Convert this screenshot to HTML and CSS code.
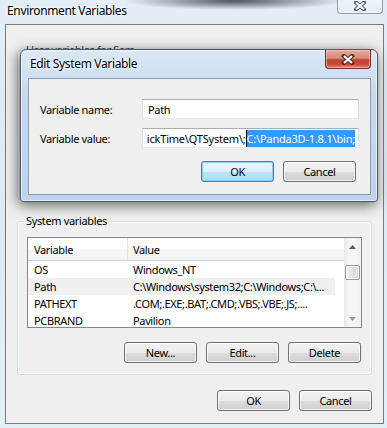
FILE: index.html
```html
<!DOCTYPE html>
<html lang="en">
<head>
  <meta charset="UTF-8" />
  <title>Environment Variables</title>
  <link rel="stylesheet" href="styles.css">
</head>
<body>
  <div class="window">
    <div class="titlebar">
      <span class="title">Environment Variables</span>
      <div class="close-btn inactive">
        <svg width="12" height="10" viewBox="0 0 12 10"><path d="M2 1.5 L10 8.5 M10 1.5 L2 8.5" stroke="#55606a" stroke-width="4" stroke-linecap="square"/><path d="M2 1.5 L10 8.5 M10 1.5 L2 8.5" stroke="#fff" stroke-width="2"/></svg>
      </div>
    </div>

    <div class="client">
      <div class="group user-group">
        <span class="group-label">User variables for Sam</span>
      </div>

      <div class="group sys-group">
        <span class="group-label">System variables</span>
        <div class="listview">
          <div class="lv-main">
            <div class="lv-header">
              <div class="col1">Variable</div>
              <div class="col2">Value</div>
            </div>
            <div class="lv-row"><div class="col1">OS</div><div class="col2">Windows_NT</div></div>
            <div class="lv-row selected"><div class="col1">Path</div><div class="col2">C:\Windows\system32;C:\Windows;C:\...</div></div>
            <div class="lv-row"><div class="col1">PATHEXT</div><div class="col2">.COM;.EXE;.BAT;.CMD;.VBS;.VBE;.JS;....</div></div>
            <div class="lv-row"><div class="col1">PCBRAND</div><div class="col2">Pavilion</div></div>
          </div>
          <div class="scrollbar">
            <div class="sb-arrow"><svg width="7" height="4" viewBox="0 0 7 4"><path d="M0 4 L3.5 0 L7 4 Z" fill="#5b5b5b"/></svg></div>
            <div class="sb-track"><div class="sb-thumb"></div></div>
            <div class="sb-arrow"><svg width="7" height="4" viewBox="0 0 7 4"><path d="M0 0 L7 0 L3.5 4 Z" fill="#9a9a9a"/></svg></div>
          </div>
        </div>
        <div class="btn-row">
          <button class="btn">New...</button>
          <button class="btn">Edit...</button>
          <button class="btn">Delete</button>
        </div>
      </div>

      <div class="btn-row footer">
        <button class="btn">OK</button>
        <button class="btn">Cancel</button>
      </div>
    </div>
  </div>

  <!-- modal: Edit System Variable -->
  <div class="dialog">
    <div class="dlg-titlebar">
      <span class="title">Edit System Variable</span>
      <div class="close-btn red">
        <svg width="14" height="11" viewBox="0 0 14 11"><path d="M3 2 L11 9 M11 2 L3 9" stroke="#5a2a22" stroke-width="4.2" stroke-linecap="square"/><path d="M3 2 L11 9 M11 2 L3 9" stroke="#fff" stroke-width="2.2"/></svg>
      </div>
    </div>
    <div class="dlg-client">
      <div class="form">
        <label>Variable name:</label>
        <div class="field"><span>Path</span></div>
        <label>Variable value:</label>
        <div class="field value"><span>ickTime\QTSystem\;</span><span class="sel">C:\Panda3D-1.8.1\bin;</span></div>
      </div>
      <div class="btn-row dlg-buttons">
        <button class="btn default">OK</button>
        <button class="btn">Cancel</button>
      </div>
    </div>
  </div>
</body>
</html>
```

FILE: styles.css
```css
body {
  margin: 0;
  width: 387px;
  height: 428px;
  overflow: hidden;
  position: relative;
  font-family: 'Noto Sans', sans-serif;
  font-size: 11px;
  letter-spacing: -0.35px;
  color: #000;
  background:
    radial-gradient(ellipse 110px 9px at 235px 1px, rgba(55, 60, 66, 0.85), rgba(55, 60, 66, 0)),
    linear-gradient(180deg, #e4eef6 0%, #dcebf4 40%, #e2f1f5 100%);
}

.window {
  padding: 0 3px 0 5px;
}

.titlebar {
  height: 24px;
  display: flex;
  align-items: flex-start;
  justify-content: space-between;
}

.title {
  padding: 2px 0 0 2px;
  font-size: 12px;
  text-shadow: 0 0 6px #fff, 0 0 3px #fff;
}

.close-btn {
  display: flex;
  align-items: center;
  justify-content: center;
  box-sizing: border-box;
}

.close-btn.inactive {
  width: 46px;
  height: 15px;
  margin-top: -1px;
  margin-right: 1px;
  border: 1px solid #8d99a4;
  border-top: none;
  border-radius: 0 0 4px 4px;
  background: linear-gradient(180deg, rgba(255, 255, 255, 0.35), rgba(230, 240, 248, 0.7));
  box-shadow: inset 0 0 0 1px rgba(255, 255, 255, 0.6);
}

.client {
  box-sizing: border-box;
  width: 379px;
  height: 400px;
  border: 1px solid #7a7a7a;
  background: #f0f0f0;
  padding: 0 11px;
  display: flex;
  flex-direction: column;
}

.group {
  position: relative;
  box-sizing: border-box;
  border: 1px solid #d5dfe5;
  border-radius: 3px;
  box-shadow: inset 0 0 0 1px #fff;
}

.group-label {
  position: absolute;
  top: -8px;
  left: 6px;
  padding: 0 2px;
  background: #f0f0f0;
  line-height: 14px;
}

.user-group {
  margin-top: 25px;
  height: 150px;
}

.user-group .group-label {
  color: #444;
}

.sys-group {
  margin-top: 21px;
  height: 154px;
  padding: 15px 9px 0 9px;
}

.listview {
  box-sizing: border-box;
  height: 91px;
  border: 1px solid #828790;
  background: #fff;
  display: flex;
  overflow: hidden;
}

.lv-main {
  flex: 1;
  overflow: hidden;
}

.lv-header {
  display: flex;
  height: 22px;
  border-bottom: 1px solid #d5d5d5;
  background: linear-gradient(180deg, #ffffff 0%, #ffffff 50%, #f7f8fa 51%, #f3f4f6 100%);
}

.lv-header div {
  display: flex;
  align-items: center;
}

.lv-header .col1 {
  border-right: 1px solid #e3e5e8;
}

.col1 {
  box-sizing: border-box;
  width: 100px;
  padding-left: 6px;
  flex-shrink: 0;
}

.col2 {
  padding-left: 5px;
  white-space: nowrap;
  overflow: hidden;
}

.lv-row {
  display: flex;
  width: 307px;
  height: 17px;
  align-items: center;
}

.lv-row.selected {
  background: #f0f0f0;
}

.scrollbar {
  width: 17px;
  display: flex;
  flex-direction: column;
  background: linear-gradient(90deg, #e9e9e9, #f6f6f6 30%, #f6f6f6 70%, #ededed);
}

.sb-arrow {
  height: 17px;
  display: flex;
  align-items: center;
  justify-content: center;
}

.sb-track {
  flex: 1;
  padding: 10px 1px 0 1px;
}

.sb-thumb {
  box-sizing: border-box;
  height: 15px;
  border: 1px solid #9b9b9b;
  border-radius: 2px;
  background: linear-gradient(90deg, #f5f5f5, #e2e2e2 50%, #d8d8d8 51%, #e6e6e6);
  box-shadow: inset 0 0 0 1px rgba(255, 255, 255, 0.7);
}

.btn-row {
  display: flex;
  justify-content: flex-end;
  gap: 9px;
}

.sys-group .btn-row {
  margin-top: 14px;
  margin-right: 1px;
}

.footer {
  margin-top: 15px;
}

.btn {
  box-sizing: border-box;
  width: 73px;
  height: 21px;
  padding: 0;
  border: 1px solid #707070;
  border-radius: 3px;
  background: linear-gradient(180deg, #f2f2f2 0%, #ebebeb 50%, #dddddd 51%, #cfcfcf 100%);
  box-shadow: inset 0 0 0 1px rgba(255, 255, 255, 0.75);
  font: inherit;
  letter-spacing: inherit;
  color: #000;
}

.btn.default {
  border-color: #3c7fb1;
  background: linear-gradient(180deg, #eaf6fd 0%, #d9f0fc 50%, #bee6fd 51%, #a7d9f5 100%);
  box-shadow: inset 0 0 0 1px #8ed0f2;
}

/* modal dialog over the main window */
.dialog {
  position: absolute;
  left: 20px;
  top: 49px;
  box-sizing: border-box;
  width: 358px;
  height: 153px;
  padding: 0 6px 7px 7px;
  border: 1px solid #4a5968;
  border-radius: 6px 6px 3px 3px;
  background: linear-gradient(180deg, #dbe8f4 0%, #c6daee 30%, #bcd4ec 100%);
  box-shadow: -2px 3px 14px rgba(0, 0, 0, 0.6), inset 0 0 0 1px rgba(255, 255, 255, 0.6);
}

.dlg-titlebar {
  height: 28px;
  display: flex;
  align-items: flex-start;
  justify-content: space-between;
}

.dlg-titlebar .title {
  padding: 5px 0 0 2px;
}

.close-btn.red {
  width: 46px;
  height: 19px;
  border: 1px solid #6d2f27;
  border-top: none;
  border-radius: 0 0 4px 4px;
  background: linear-gradient(180deg, #e8a89c 0%, #d98a7c 45%, #c0412f 55%, #c94e3b 80%, #e08a76 100%);
  box-shadow: inset 0 0 0 1px rgba(255, 220, 210, 0.5);
}

.dlg-client {
  box-sizing: border-box;
  height: 117px;
  border: 1px solid #8e9fb2;
  background: #f0f0f0;
  padding: 20px 12px 0 11px;
}

.form {
  display: grid;
  grid-template-columns: 102px 217px;
  row-gap: 9px;
  align-items: center;
}

.field {
  box-sizing: border-box;
  height: 20px;
  display: flex;
  align-items: center;
  padding: 0 3px 0 5px;
  border: 1px solid;
  border-color: #abadb3 #dbdfe6 #e3e9ef #e2e3ea;
  background: #fff;
  white-space: nowrap;
  overflow: hidden;
}

.field.value {
  justify-content: flex-end;
  letter-spacing: -0.2px;
}

.sel {
  background: #3399ff;
  color: #fff;
  padding: 1px 0;
  border-left: 1px solid #000;
}

.dlg-buttons {
  margin-top: 13px;
  margin-right: 2px;
}
```
